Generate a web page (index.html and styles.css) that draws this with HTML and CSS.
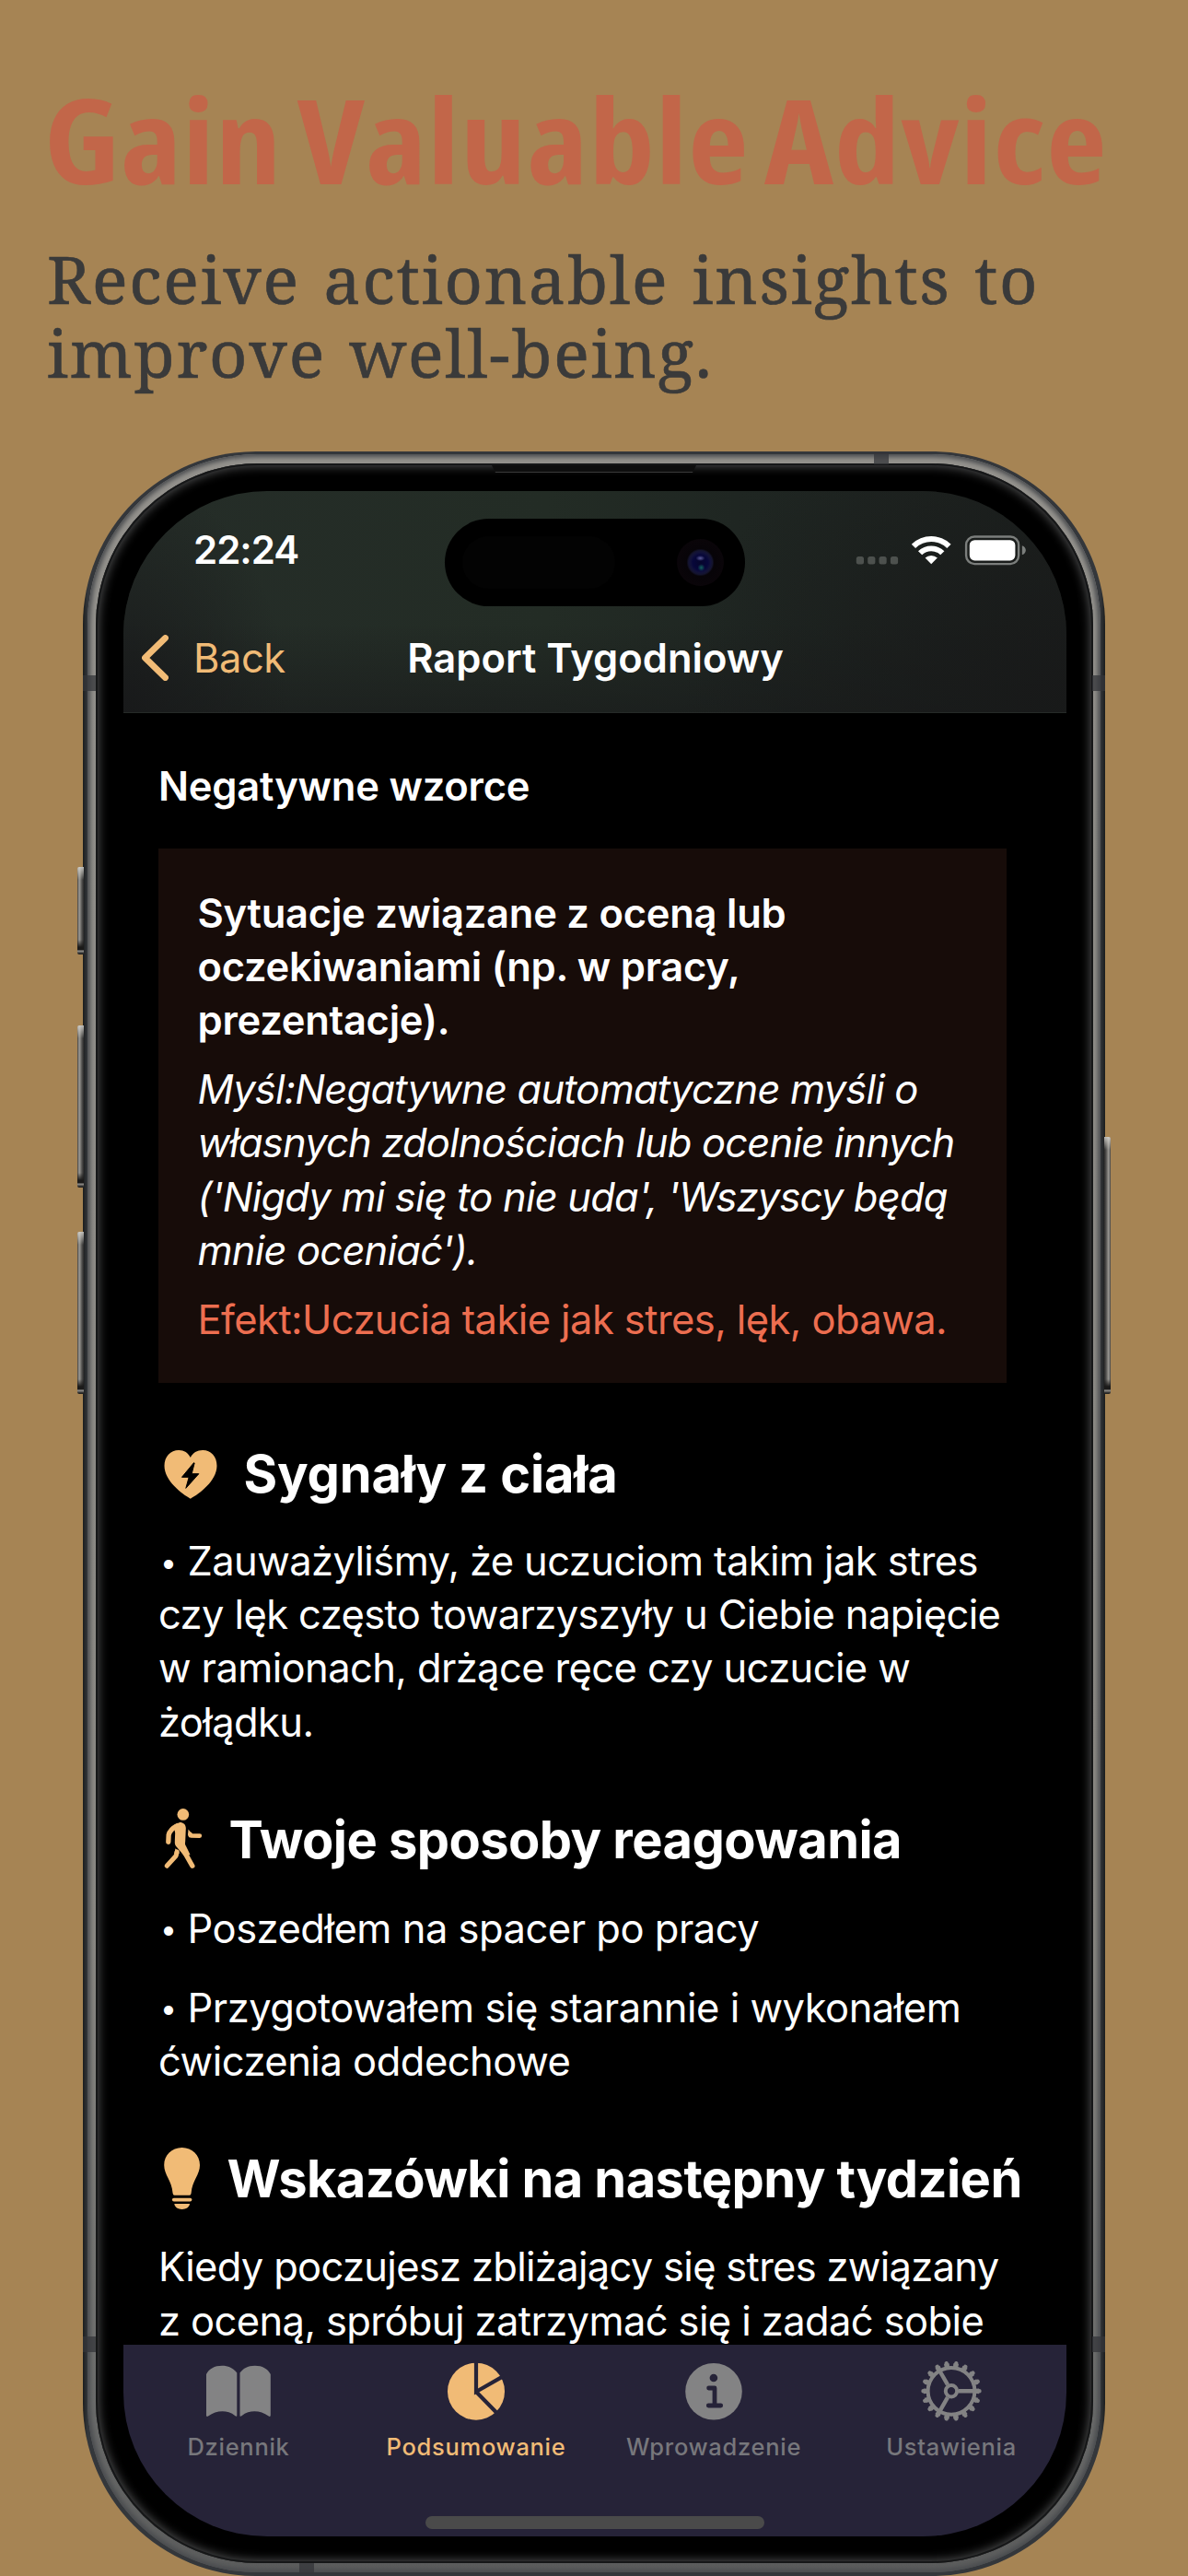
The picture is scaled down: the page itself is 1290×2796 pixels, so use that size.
FILE: index.html
```
<!DOCTYPE html>
<html lang="pl">
<head>
<meta charset="utf-8">
<title>Raport Tygodniowy</title>
<link rel="stylesheet" href="styles.css">
</head>
<body>
<main class="page">
  <header class="hero">
    <h1 class="hero-title">Gain Valuable Advice</h1>
    <p class="hero-sub">Receive actionable insights to<br>improve well-being.</p>
  </header>

  <div class="phone">
    <span class="key key-action"></span>
    <span class="key key-up"></span>
    <span class="key key-down"></span>
    <span class="key key-power"></span>
    <div class="band">
      <div class="bezel">
        <div class="screen">
          <header class="top">
            <div class="status">
              <span class="clock">22:24</span>
              <svg class="status-icons" viewBox="928 576 190 40">
                <g fill="#4d514e"><rect x="929.8" y="604" width="8.2" height="8.4" rx="2.5"/><rect x="942.2" y="604" width="8.2" height="8.4" rx="2.5"/><rect x="954.5" y="604" width="8.2" height="8.4" rx="2.5"/><rect x="966.9" y="604" width="8.2" height="8.4" rx="2.5"/></g>
                <g fill="#fff">
                  <path d="M1011.2 612.3 L1004.6 605.6 A9.6 9.6 0 0 1 1017.8 605.6 Z"/>
                  <path d="M997 598.2 A20.4 20.4 0 0 1 1025.4 598.2 L1021.2 602.3 A14.5 14.5 0 0 0 1001.2 602.3 Z"/>
                  <path d="M989.8 590.7 A30.8 30.8 0 0 1 1032.6 590.7 L1028.3 594.9 A24.8 24.8 0 0 0 994.1 594.9 Z"/>
                </g>
                <rect x="1049.1" y="582.5" width="57" height="29.6" rx="9" fill="none" stroke="#7b7e7c" stroke-width="2.4"/>
                <rect x="1052.8" y="586.2" width="49.6" height="22.2" rx="5.6" fill="#fff"/>
                <path d="M1109.8 592.3 C1115.2 594 1115.2 600.6 1109.8 602.3 Z" fill="#7b7e7c"/>
              </svg>
            </div>
            <nav class="nav">
              <a class="back"><svg class="chevron" viewBox="0 0 30 50"><path d="M26.5 3.5 L4.500 25 L26.5 46.5" fill="none" stroke="#f1bb76" stroke-width="6.800" stroke-linecap="round" stroke-linejoin="round"/></svg>Back</a>
              <span class="nav-title">Raport Tygodniowy</span>
            </nav>
          </header>

          <section class="content">
            <h3 class="label">Negatywne wzorce</h3>
            <article class="card">
              <p class="situation">Sytuacje związane z oceną lub<br>oczekiwaniami (np. w pracy,<br>prezentacje).</p>
              <p class="thought">Myśl:Negatywne automatyczne myśli o<br>własnych zdolnościach lub ocenie innych<br>('Nigdy mi się to nie uda', 'Wszyscy będą<br>mnie oceniać').</p>
              <p class="effect">Efekt:Uczucia takie jak stres, lęk, obawa.</p>
            </article>

            <h2 class="section section-body"><svg class="icon-heart" viewBox="22.5 36 200 171"><path fill="#f1bb76" d="M127 200 C100 185 42 142 42 93 C42 63 62 42 89 42 C106 42 120 51 127 66 C134 51 149 42 167 42 C194 42 213 63 213 93 C213 142 155 185 127 200Z"/><path fill="#000" stroke="#000" stroke-width="3" stroke-linejoin="round" d="M138 83 L99 130 L122 130 L112 166 L154 119 L131 119 L140 84Z"/></svg>Sygnały z ciała</h2>
            <p class="text"><span class="dot">•</span>Zauważyliśmy, że uczuciom takim jak stres<br>czy lęk często towarzyszyły u Ciebie napięcie<br>w ramionach, drżące ręce czy uczucie w<br>żołądku.</p>

            <h2 class="section section-react"><svg class="icon-walk" viewBox="22.5 21.3 150 207"><g fill="none" stroke="#f1bb76" stroke-linecap="round" stroke-linejoin="round"><path stroke-width="16" d="M84 80 Q60 92 56 110 L55 133"/><path stroke-width="16" d="M93 140 L133 211"/><path stroke-width="15" d="M83 165 L80 178 L50 211"/><path stroke-width="14" d="M126 108 L129 112.500 L157 113"/></g><path fill="#f1bb76" d="M92 69 C104 69 112 76 112 88 L110 132 C109 138 109 140 112 146 L126 174 L108 180 L84 152 C78 146 75 140 76 130 L77 104 L72 78 Z M120 92 L133 108 L124 119 C120 116 119 112 119 106Z M78 154 L91 168 L86 176 L74 172Z"/><circle cx="103" cy="43.500" r="19" fill="#f1bb76"/></svg>Twoje sposoby reagowania</h2>
            <p class="text item"><span class="dot">•</span>Poszedłem na spacer po pracy</p>
            <p class="text item next"><span class="dot">•</span>Przygotowałem się starannie i wykonałem<br>ćwiczenia oddechowe</p>

            <h2 class="section section-tips"><svg class="icon-bulb" viewBox="0 0 50 70"><g fill="#f1bb76"><path d="M25.600 1.100 C14.500 1.100 6.200 9.400 6.200 20 C6.200 31 14.500 36 15.600 50.500 Q15.800 52.700 17.500 52.700 H33.700 Q35.400 52.700 35.600 50.500 C36.700 36 45 31 45 20 C45 9.400 36.700 1.100 25.600 1.100Z"/><rect x="14.900" y="55.700" width="21.500" height="3.800" rx="1.900"/><path d="M17.300 62 H34 C33.500 66 30 67.900 25.600 67.900 C21.300 67.900 17.800 66 17.300 62Z"/></g></svg>Wskazówki na następny tydzień</h2>
            <p class="text"><span class="tight">Kiedy poczujesz zbliżający się stres związany</span><br>z oceną, spróbuj zatrzymać się i zadać sobie</p>
          </section>

          <footer class="tabs">
            <a class="tab"><svg class="tab-icon" viewBox="0 0 80 70"><g fill="#838384"><path id="leaf" d="M5 17 C8 11 14 7.700 22 7.700 C30 7.700 35 11 38.300 15.500 V61.500 C38.300 63.200 37.500 63 36.500 62.300 C32 58.500 27 57.300 22.500 57.300 C17 57.300 12 59 7 62.500 C6 63.200 5 63 5 61.500Z"/><use href="#leaf" transform="translate(79.800 0) scale(-1 1)"/></g></svg><span>Dziennik</span></a>
            <a class="tab active"><svg class="tab-icon" viewBox="0 0 80 70"><circle cx="40" cy="35.700" r="31" fill="#f1bb76"/><path d="M40 2 V36 L70 18.900 M40 36 L64 60.500" fill="none" stroke="#262338" stroke-width="4.200"/></svg><span>Podsumowanie</span></a>
            <a class="tab"><svg class="tab-icon" viewBox="0 0 80 70"><circle cx="40" cy="35.700" r="30.800" fill="#838384"/><circle cx="39.900" cy="21" r="4.300" fill="#262338"/><path d="M34.600 32 H41 V51 M34.300 51 H47.700" fill="none" stroke="#262338" stroke-width="4.800" stroke-linecap="round" stroke-linejoin="round"/></svg><span>Wprowadzenie</span></a>
            <a class="tab"><svg class="tab-icon" viewBox="0 0 80 70"><g fill="none" stroke="#838384"><circle cx="40" cy="35.300" r="25.400" stroke-width="4"/><circle cx="40" cy="35.300" r="28" stroke-width="4.500" pathLength="18" stroke-dasharray=".56 .44" stroke-dashoffset=".28"/><circle cx="40" cy="35.300" r="30.500" stroke-width="4.400" pathLength="18" stroke-dasharray="0.001 .999" stroke-linecap="round"/><circle cx="40" cy="35.300" r="6.200" stroke-width="4"/><path stroke-width="4.400" d="M48 35.300 H64 M36 28.400 L28 14.500 M36 42.200 L28 56.100"/></g></svg><span>Ustawienia</span></a>
          </footer>
          <span class="home-bar"></span>
          <span class="island"><i class="sensor"></i><i class="lens"></i></span>
        </div>
      </div>
    </div>
    <span class="seam seam-l1"></span><span class="seam seam-l2"></span><span class="seam seam-r1"></span><span class="seam seam-r2"></span><span class="seam seam-t"></span><span class="seam seam-b"></span>
    <span class="speaker"></span>
  </div>
</main>
</body>
</html>
```
FILE: styles.css
```
* { box-sizing: border-box; }
body { margin: 0; background: #a68454; }
h1, h2, h3, p { margin: 0; font-weight: inherit; }

.page {
  width: 1290px;
  height: 2796px;
  overflow: hidden;
  display: flex;
  flex-direction: column;
  background: #a68454;
  font-family: Inter, "Liberation Sans", sans-serif;
  white-space: nowrap;
}

.hero { height: 490px; padding: 81px 0 0 48px; }
.hero-title {
  width: max-content;
  font-family: "Open Sans", "Noto Sans", sans-serif;
  font-weight: 750;
  font-stretch: 83%;
  font-size: 127px;
  line-height: 140px;
  letter-spacing: .9px;
  word-spacing: -9px;
  color: #c26649;
  transform: scaleX(1.123);
  transform-origin: 0 0;
}
.hero-sub {
  margin: 41px 0 0 3px;
  font-family: "Noto Serif", "DejaVu Serif", serif;
  font-size: 72px;
  line-height: 80px;
  letter-spacing: 1.7px;
  word-spacing: 5px;
  color: #3a3a3a;
  -webkit-text-stroke: .6px #3a3a3a;
}

/* Device frame */
.phone {
  position: relative;
  width: 1110px;
  height: 2306px;
  margin-left: 90px;
  padding: 3px 5px 4px 5px;
  border-radius: 188px;
  background: linear-gradient(90deg, #1b1d1e, #34373b 5px, #34373b 1105px, #1b1d1e);
}
.band {
  height: 100%;
  padding: 10px 8px 10px 9px;
  border-radius: 184px;
  background: linear-gradient(#94928d 0, #8b8984 70%, #6b6c6b 92%, #5b5c5c 100%);
  box-shadow: inset 0 0 5px 3px #4a4c4f;
}
.bezel {
  height: 100%;
  padding: 30px 29px 29px 30px;
  border-radius: 176px;
  background: #000;
  box-shadow: inset 0 0 0 2px #161718, inset 0 0 11px 3px #505152;
}
.screen {
  position: relative;
  height: 100%;
  display: flex;
  flex-direction: column;
  border-radius: 156px;
  overflow: hidden;
  background: #000;
}

.key {
  position: absolute;
  left: -6px;
  width: 7px;
  border-radius: 2px 0 0 2px;
  background:
    linear-gradient(rgba(220,218,212,.8), transparent 14px, transparent calc(100% - 16px), #1b1a19 calc(100% - 8px), #1b1a19 calc(100% - 5px), #9a9893 calc(100% - 4px), #222 calc(100% - 1px)),
    linear-gradient(90deg, #3c3b39, #a09e99 2px, #504f4d 5px, #2a2a2a);
}
.key-action { top: 451px; height: 95px; }
.key-up { top: 623px; height: 176px; }
.key-down { top: 847px; height: 176px; }
.key-power { top: 744px; left: 1109px; height: 279px; transform: scaleX(-1); }

.seam { position: absolute; background: rgba(52,54,58,.75); width: 14px; height: 17px; }
.seam-l1 { left: 0; top: 243px; }
.seam-r1 { right: 0; top: 243px; }
.seam-l2 { left: 0; top: 2046px; }
.seam-r2 { right: 0; top: 2046px; }
.seam-t { left: 859px; top: 1px; width: 16px; height: 13px; }
.seam-b { left: 235px; bottom: 2px; width: 16px; height: 12px; }
.speaker {
  position: absolute;
  left: 444px;
  top: 15px;
  width: 222px;
  height: 8px;
  background: #0e0e0e;
  border-bottom: 1px solid #3a3a3a;
  clip-path: polygon(0 0, 100% 0, calc(100% - 4px) 100%, 4px 100%);
}

/* Status and navigation bar */
.top {
  height: 240.5px;
  flex: none;
  padding-top: 38.7px;
  background:
    radial-gradient(ellipse 420px 330px at 100% 90%, rgba(24,25,25,.9), transparent),
    radial-gradient(ellipse 180px 260px at 0% 100%, rgba(24,25,26,.95), transparent),
    linear-gradient(transparent 60%, rgba(25,27,27,.65)),
    linear-gradient(90deg, #252d28, #232c25 45%, #1f2622 65%, #1c201e);
  border-bottom: 1px solid #262a28;
}
.status {
  display: flex;
  justify-content: space-between;
  align-items: flex-start;
  height: 50px;
  padding: 0 40px 0 76px;
}
.clock { font-size: 42px; line-height: 50px; font-weight: 600; letter-spacing: -1px; color: #fff; }
.status-icons { width: 190px; height: 40px; margin-top: 4.3px; }
.nav {
  display: grid;
  grid-template-columns: 1fr auto 1fr;
  margin-top: 63.4px;
  padding-left: 1px;
  font-size: 43.5px;
  line-height: 58.2px;
}
.back { display: flex; align-items: center; gap: 27px; padding-left: 18px; color: #f1bb76; letter-spacing: -.5px; }
.chevron { width: 30px; height: 50px; }
.nav-title { grid-column: 2; font-weight: 600; color: #fff; }

/* Report */
.content {
  flex: 1;
  min-height: 0;
  overflow: hidden;
  padding: 50.5px 0 0 38px;
  font-size: 43.5px;
  line-height: 58.2px;
  letter-spacing: -.61px;
  color: #fff;
}
.label { font-weight: 600; font-size: 43.5px; letter-spacing: -.22px; }
.card { width: 921px; height: 580px; margin-top: 38.500px; padding: 41px 42.5px 0; background: #170c09; }
.situation { font-weight: 600; letter-spacing: -.25px; }
.thought { margin-top: 16.8px; font-style: italic; letter-spacing: -.82px; }
.effect { margin-top: 16.8px; letter-spacing: -.58px; color: #ed6e50; }

.section { display: flex; align-items: center; height: 70px; font-size: 56px; line-height: 70px; font-weight: 700; letter-spacing: -.57px; }
.section-body { margin: 64.3px 0 30px; letter-spacing: -.15px; }
.section-react { margin: 63.9px 0 32.2px; }
.section-tips { margin: 63.5px 0 31.6px; }
.icon-heart { width: 66.67px; height: 57px; margin-right: 25.8px; }
.icon-walk { width: 50px; height: 69px; margin-right: 26.5px; }
.icon-bulb { width: 50px; height: 70px; margin-right: 24.5px; }

.text { margin-left: 0; }
.item { letter-spacing: -.5px; }
.next { margin-top: 27.8px; }
.tight { letter-spacing: -.7px; }
.dot { display: inline-block; width: 31.5px; padding-left: 2px; font-size: 32px; line-height: 1; vertical-align: 3.5px; }

/* Tab bar */
.tabs {
  flex: none;
  height: 208px;
  display: grid;
  grid-template-columns: repeat(4, 258px);
  justify-content: center;
  padding-top: 15px;
  background: #262338;
  font-size: 25.5px;
  font-weight: 500;
  line-height: 32px;
  letter-spacing: .7px;
  color: #77777c;
}
.tab { display: flex; flex-direction: column; align-items: center; gap: 9.5px; }
.tab-icon { width: 80px; height: 70px; }
.active { color: #f1bb76; }
.home-bar { position: absolute; left: 328px; bottom: 8.500px; width: 368px; height: 13.500px; border-radius: 7px; background: #4a4a4a; }

.island { position: absolute; left: 349px; top: 30px; width: 326px; height: 95px; border-radius: 48px; background: #000; }
.sensor { position: absolute; left: 19px; top: 19px; width: 166px; height: 57px; border-radius: 29px; background: #030303; }
.lens {
  position: absolute;
  left: 252px;
  top: 22px;
  width: 51px;
  height: 51px;
  border-radius: 50%;
  background:
    radial-gradient(ellipse 5px 3px at 50% 41%, #5b5b9a, transparent),
    radial-gradient(ellipse 4px 4px at 52% 61%, #12605c, transparent),
    radial-gradient(circle at 50% 50%, #06062c 0, #07073a 8px, #12123a 11px, #14142e 13px, #070408 15px, #0a0509 26px);
}
```
